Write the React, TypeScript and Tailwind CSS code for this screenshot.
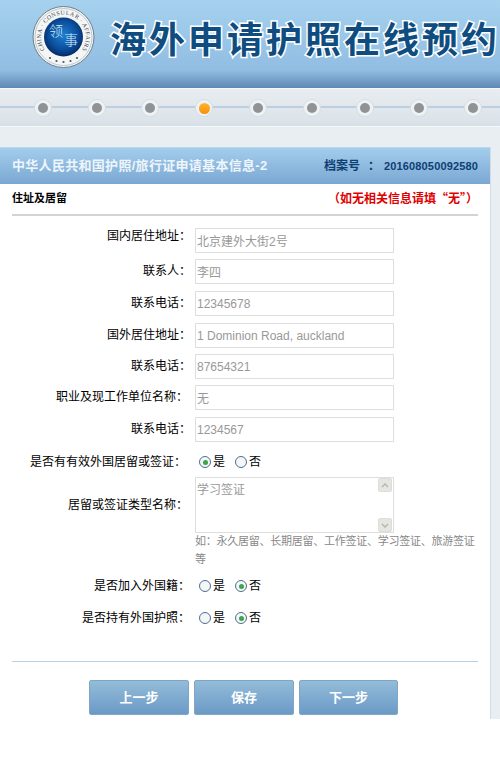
const font = "[font-family:'Liberation_Sans','Noto_Sans_CJK_SC',sans-serif]";
const cjk = "[font-family:'Noto_Sans_CJK_SC',sans-serif]";

function Logo() {
    return (
        <svg width="64" height="64" viewBox="0 0 64 64" className="shrink-0">
            <defs>
                <radialGradient id="seal" cx="50%" cy="45%" r="55%">
                    <stop offset="0%" stopColor="#1f7fd0" />
                    <stop offset="65%" stopColor="#0b4f9e" />
                    <stop offset="100%" stopColor="#062a66" />
                </radialGradient>
                <path id="arc" d="M13.8 44.6 A22.5 22.5 0 1 1 51.2 44.6" fill="none" />
            </defs>
            <circle cx="32.5" cy="32" r="30.5" fill="#f4f5f5" stroke="#6d7f8c" strokeWidth="1" />
            <circle cx="32.5" cy="32" r="28.5" fill="none" stroke="#9aa7b0" strokeWidth="0.6" />
            <text fontSize="6" fill="#39434c" fontFamily="Liberation Serif, serif">
                <textPath href="#arc" textLength="97" lengthAdjust="spacing">CHINA · CONSULAR · AFFAIRS</textPath>
            </text>
            <circle cx="32.5" cy="32" r="19.5" fill="url(#seal)" />
            <text x="18" y="31" fontSize="14" fill="#d6ebf9" fontFamily="Noto Sans CJK SC, sans-serif" fontWeight="300">领</text>
            <text x="33" y="40" fontSize="14" fill="#d6ebf9" fontFamily="Noto Sans CJK SC, sans-serif" fontWeight="300">事</text>
            <g fill="#4b5660">
                <circle cx="19" cy="53" r="1.1" />
                <circle cx="25.5" cy="56" r="1.1" />
                <circle cx="32.5" cy="57" r="1.1" />
                <circle cx="39.5" cy="56" r="1.1" />
                <circle cx="46" cy="53" r="1.1" />
            </g>
        </svg>
    );
}

function Step({ active }: { active?: boolean }) {
    return (
        <div className="relative w-[53.75px] h-[18px] shrink-0 flex items-center justify-center">
            <div className="w-[18px] h-[18px] rounded-full bg-[#eef2f5] border border-[#d5dde4] flex items-center justify-center">
                <div
                    className={
                        active
                            ? "w-[11px] h-[11px] rounded-full bg-gradient-to-b from-[#ffb52e] to-[#f98f06]"
                            : "w-[10px] h-[10px] rounded-full bg-[#8f9396]"
                    }
                />
            </div>
        </div>
    );
}

function Label({ children, className }: { children: string; className: string }) {
    return <div className={`shrink-0 text-right text-[12px] text-black ${className}`}>{children}</div>;
}

function TextRow({
    label,
    value,
    className,
    labelClass = "w-[191px] mr-[4px] pb-[2px]",
}: {
    label: string;
    value: string;
    className: string;
    labelClass?: string;
}) {
    return (
        <div className={`flex items-center ${className}`}>
            <Label className={labelClass}>{label}</Label>
            <input
                readOnly
                value={value}
                className={`w-[199px] h-[25px] border border-[#dedede] bg-white px-[1px] text-[12px] text-[#999] outline-none ${font}`}
            />
        </div>
    );
}

function Radio({ label, checked }: { label: string; checked?: boolean }) {
    return (
        <span className="flex items-center gap-[2px] text-[12px] text-black">
            <span className="w-[12px] h-[12px] rounded-full border border-[#4c6f91] bg-[#f4f6f8] flex items-center justify-center">
                {checked && <span className="w-[5px] h-[5px] rounded-full bg-[#3aa54a]" />}
            </span>
            {label}
        </span>
    );
}

function RadioRow({
    label,
    yes,
    className,
    labelClass,
}: {
    label: string;
    yes: boolean;
    className: string;
    labelClass: string;
}) {
    return (
        <div className={`flex items-center h-[16px] ${className}`}>
            <Label className={labelClass}>{label}</Label>
            <div className="flex gap-[10px]">
                <Radio label="是" checked={yes} />
                <Radio label="否" checked={!yes} />
            </div>
        </div>
    );
}

function Arrow({ up }: { up?: boolean }) {
    return (
        <div className="w-[14px] h-[14px] bg-[#e6e6e0] border border-[#ddd] rounded-[2px] flex items-center justify-center">
            <svg width="8" height="5" viewBox="0 0 8 5">
                <path d={up ? "M1 4l3-3 3 3" : "M1 1l3 3 3-3"} fill="none" stroke="#b5b5ae" strokeWidth="1.4" />
            </svg>
        </div>
    );
}

function StepButton({ children, className }: { children: string; className: string }) {
    return (
        <button className={`h-[35px] rounded-[2px] border border-[#7ea6c6] bg-gradient-to-b from-[#93bcd8] to-[#6c9ac7] text-[13px] font-bold text-white ${className}`}>
            {children}
        </button>
    );
}

export default function App() {
    return (
        <div className={`w-[500px] h-[777px] overflow-hidden bg-white ${font}`}>
            <header className="h-[88px] bg-gradient-to-b from-[#a6d2ef] via-[#90bde2] via-80% to-[#5f88b4] flex items-start pl-[31px] pt-[5px] gap-[15px] overflow-hidden">
                <Logo />
                <h1 className="whitespace-nowrap mt-[14px] text-[36px] leading-[44px] tracking-[3px] font-bold text-[#0f4d80] [-webkit-text-stroke:3px_#fff] [paint-order:stroke_fill]">
                    海外申请护照在线预约
                </h1>
            </header>

            <div className="relative h-[39px] bg-gradient-to-b from-[#e9edf1] to-[#d9e1e8] border-t border-[#f4f6f8] border-b-[#f6f8fa] border-b">
                <div className="absolute left-0 right-0 top-[17px] h-[2px] bg-[#bccfdf]" />
                <div className="relative flex pl-[16px] pt-[10px]">
                    <Step />
                    <Step />
                    <Step />
                    <Step active />
                    <Step />
                    <Step />
                    <Step />
                    <Step />
                    <Step />
                </div>
            </div>

            <div className="bg-[#e9eef3] pt-[20px] pr-[9px]">
                <main className="h-[572px] bg-white border-r border-[#d3dce5] flex flex-col">
                    <div className="h-[37px] bg-gradient-to-b from-[#a3cdec] to-[#7ba8d3] flex items-center justify-between pl-[12px] pr-[12px] border-t border-[#bcd6ea]">
                        <span className="text-[13px] tracking-[0.3px] font-bold text-[#eef5fb]">中华人民共和国护照/旅行证申请基本信息-2</span>
                        <span className="flex text-[12px] font-bold text-[#0e3f73]">
                            <span>档案号</span>
                            <span className="ml-[8px] mr-[4px]">：</span>
                            <span className="text-[11px] leading-[18px] tracking-[0.15px]">201608050092580</span>
                        </span>
                    </div>

                    <div className="mx-[12px] h-[32px] border-b-2 border-[#d3d3d3] flex items-center justify-between pb-[2px]">
                        <span className="text-[11px] font-bold text-black">住址及居留</span>
                        <span className={`text-[12px] font-bold text-[#e00000] ${cjk}`}>（如无相关信息请填“无”）</span>
                    </div>

                    <div className="pt-[11px]">
                        <TextRow label="国内居住地址：" value="北京建外大街2号" className="mb-[6px]" labelClass="w-[191px] mr-[4px] pb-[8px]" />
                        <TextRow label="联系人：" value="李四" className="mb-[7px]" />
                        <TextRow label="联系电话：" value="12345678" className="mb-[7px]" />
                        <TextRow label="国外居住地址：" value="1 Dominion Road, auckland" className="mb-[6px]" />
                        <TextRow label="联系电话：" value="87654321" className="mb-[6px]" />
                        <TextRow label="职业及现工作单位名称：" value="无" className="mb-[7px]" labelClass="w-[188px] mr-[7px] pb-[2px]" />
                        <TextRow label="联系电话：" value="1234567" className="mb-[12px]" />
                        <RadioRow label="是否有有效外国居留或签证：" yes className="mb-[7px]" labelClass="w-[186px] mr-[13px]" />

                        <div className="flex items-center">
                            <Label className="w-[188px] mr-[7px]">居留或签证类型名称：</Label>
                            <div className="w-[199px] h-[56px] border border-[#dedede] flex">
                                <textarea
                                    readOnly
                                    value="学习签证"
                                    className={`flex-1 min-w-0 resize-none overflow-hidden pt-[3px] px-[1px] text-[12px] text-[#999] outline-none ${font}`}
                                />
                                <div className="w-[15px] flex flex-col justify-between">
                                    <Arrow up />
                                    <Arrow />
                                </div>
                            </div>
                        </div>
                        <p className="ml-[195px] w-[284px] -mt-[1px] text-[11px] tracking-[-0.25px] leading-[18px] text-[#888]">
                            如：永久居留、长期居留、工作签证、学习签证、旅游签证等
                        </p>
                        <RadioRow label="是否加入外国籍：" yes={false} className="mt-[10px]" labelClass="w-[190px] mr-[9px]" />
                        <RadioRow label="是否持有外国护照：" yes={false} className="mt-[16px]" labelClass="w-[190px] mr-[9px]" />
                    </div>

                    <div className="mx-[12px] mt-[35px] border-t border-[#b5d2e6]" />
                    <div className="flex gap-[5px] pl-[89px] mt-[18px]">
                        <StepButton className="w-[100px]">上一步</StepButton>
                        <StepButton className="w-[100px]">保存</StepButton>
                        <StepButton className="w-[99px]">下一步</StepButton>
                    </div>
                </main>
            </div>
        </div>
    );
}
